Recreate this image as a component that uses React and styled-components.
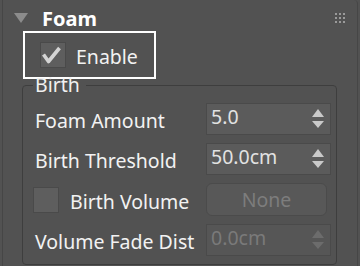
import React from "react";
import styled, { createGlobalStyle } from "styled-components";

const GlobalStyle = createGlobalStyle`
  html, body {
    margin: 0;
    padding: 0;
    background: #525252;
  }
  body {
    font-family: "Noto Sans", "Open Sans", sans-serif;
  }
`;

const Rollout = styled.section`
  box-sizing: border-box;
  width: 356px;
  height: 266px;
  margin-left: 2px;
  border-left: 1px solid #464646;
  border-right: 1px solid #464646;
  border-top-right-radius: 4px;
  overflow: hidden;
`;

const Header = styled.div`
  box-sizing: border-box;
  display: flex;
  align-items: flex-start;
  height: 31px;
  padding: 6px 12px 0 11px;
`;

const Caret = styled.svg`
  margin-top: 7px;
  flex: none;
`;

const Title = styled.span`
  margin-left: 14px;
  font-size: 20px;
  font-weight: 700;
  line-height: 25px;
  color: #ffffff;
`;

const Grip = styled.svg`
  margin: 7px 0 0 auto;
  flex: none;
`;

const Highlight = styled.div`
  box-sizing: border-box;
  display: flex;
  align-items: center;
  gap: 10px;
  width: 133px;
  height: 48px;
  margin-left: 20px;
  padding-left: 15px;
  border: 2px solid #ffffff;
`;

const Box = styled.span`
  box-sizing: border-box;
  display: flex;
  align-items: center;
  justify-content: center;
  flex: none;
  width: 26px;
  height: 26px;
  border: 1px solid #4a4a4a;
  background: #5e5e5e;
`;

const Text = styled.span`
  padding-top: ${({ $shift }) => $shift || 0}px;
  font-size: 19.5px;
  line-height: 26px;
  color: #f2f2f2;
  white-space: nowrap;
`;

const Group = styled.fieldset`
  box-sizing: border-box;
  width: 315px;
  min-width: 0;
  margin: 0 0 0 19px;
  padding: 12px 5px 8px 10px;
  border: 1px solid #3e3e3e;
  border-radius: 4px;
`;

const Legend = styled.legend`
  padding: 0 6px 0 2px;
  font-size: 19.5px;
  line-height: 12px;
  color: #f0f0f0;
`;

const Rows = styled.div`
  display: flex;
  flex-direction: column;
  gap: 8px;
`;

const Row = styled.div`
  display: grid;
  grid-template-columns: 1fr 125px;
  align-items: center;
  height: ${({ $h }) => $h || 32}px;
`;

const Label = styled.span`
  padding: 4px 0 0 2px;
  font-size: 19.5px;
  line-height: 28px;
  color: #f2f2f2;
  white-space: nowrap;
`;

const CheckCell = styled.div`
  display: flex;
  align-items: center;
  gap: 9px;
`;

const Spinner = styled.div`
  box-sizing: border-box;
  display: flex;
  align-items: center;
  justify-content: space-between;
  height: 32px;
  padding: 0 6px 0 4px;
  border: 1px solid #4a4a4a;
  background: ${({ $disabled }) => ($disabled ? "#565656" : "#5b5b5b")};
`;

const Value = styled.span`
  align-self: flex-start;
  font-size: 19.5px;
  line-height: 26px;
  color: ${({ $disabled }) => ($disabled ? "#7a7a7a" : "#e2e2e2")};
`;

const NoneButton = styled.div`
  box-sizing: border-box;
  display: flex;
  align-items: center;
  justify-content: center;
  width: 121px;
  height: 33px;
  border: 1px solid #4b4b4b;
  border-radius: 6px;
  background: #585858;
  font-size: 19.5px;
  color: #7d7d7d;
`;

const Arrows = ({ dim }) => (
  <svg width="12" height="20" viewBox="0 0 12 20">
    <polygon points="0,8 6,0 12,8" fill={dim ? "#6c6c6c" : "#c9c9c9"} />
    <polygon points="0,12 12,12 6,19" fill={dim ? "#6c6c6c" : "#c9c9c9"} />
  </svg>
);

const SpinField = ({ value, disabled }) => (
  <Spinner $disabled={disabled}>
    <Value $disabled={disabled}>{value}</Value>
    <Arrows dim={disabled} />
  </Spinner>
);

const Check = () => (
  <svg width="24" height="24" viewBox="0 0 24 24">
    <path d="M2.5 11.5 L7.5 18.5 L18.5 5" fill="none" stroke="#d4d4d4" strokeWidth="3.6" strokeLinejoin="round" />
  </svg>
);

const App = () => (
  <>
    <GlobalStyle />
    <Rollout>
      <Header>
        <Caret width="14" height="10" viewBox="0 0 14 10">
          <polygon points="0,0 14,0 7,10" fill="#8c8c8c" />
        </Caret>
        <Title>Foam</Title>
        <Grip width="10" height="10" viewBox="0 0 10 10">
          {[0, 4, 8].map((y) =>
            [0, 4, 8].map((x) => <rect key={`${x}-${y}`} x={x} y={y} width="2" height="2" fill="#9a9a9a" />)
          )}
        </Grip>
      </Header>

      <Highlight>
        <Box>
          <Check />
        </Box>
        <Text $shift={3}>Enable</Text>
      </Highlight>

      <Group>
        <Legend>Birth</Legend>
        <Rows>
          <Row>
            <Label>Foam Amount</Label>
            <SpinField value="5.0" />
          </Row>
          <Row>
            <Label>Birth Threshold</Label>
            <SpinField value="50.0cm" />
          </Row>
          <Row $h={33}>
            <CheckCell>
              <Box />
              <Label>Birth Volume</Label>
            </CheckCell>
            <NoneButton>None</NoneButton>
          </Row>
          <Row>
            <Label>Volume Fade Dist</Label>
            <SpinField value="0.0cm" disabled />
          </Row>
        </Rows>
      </Group>
    </Rollout>
  </>
);

export default App;
